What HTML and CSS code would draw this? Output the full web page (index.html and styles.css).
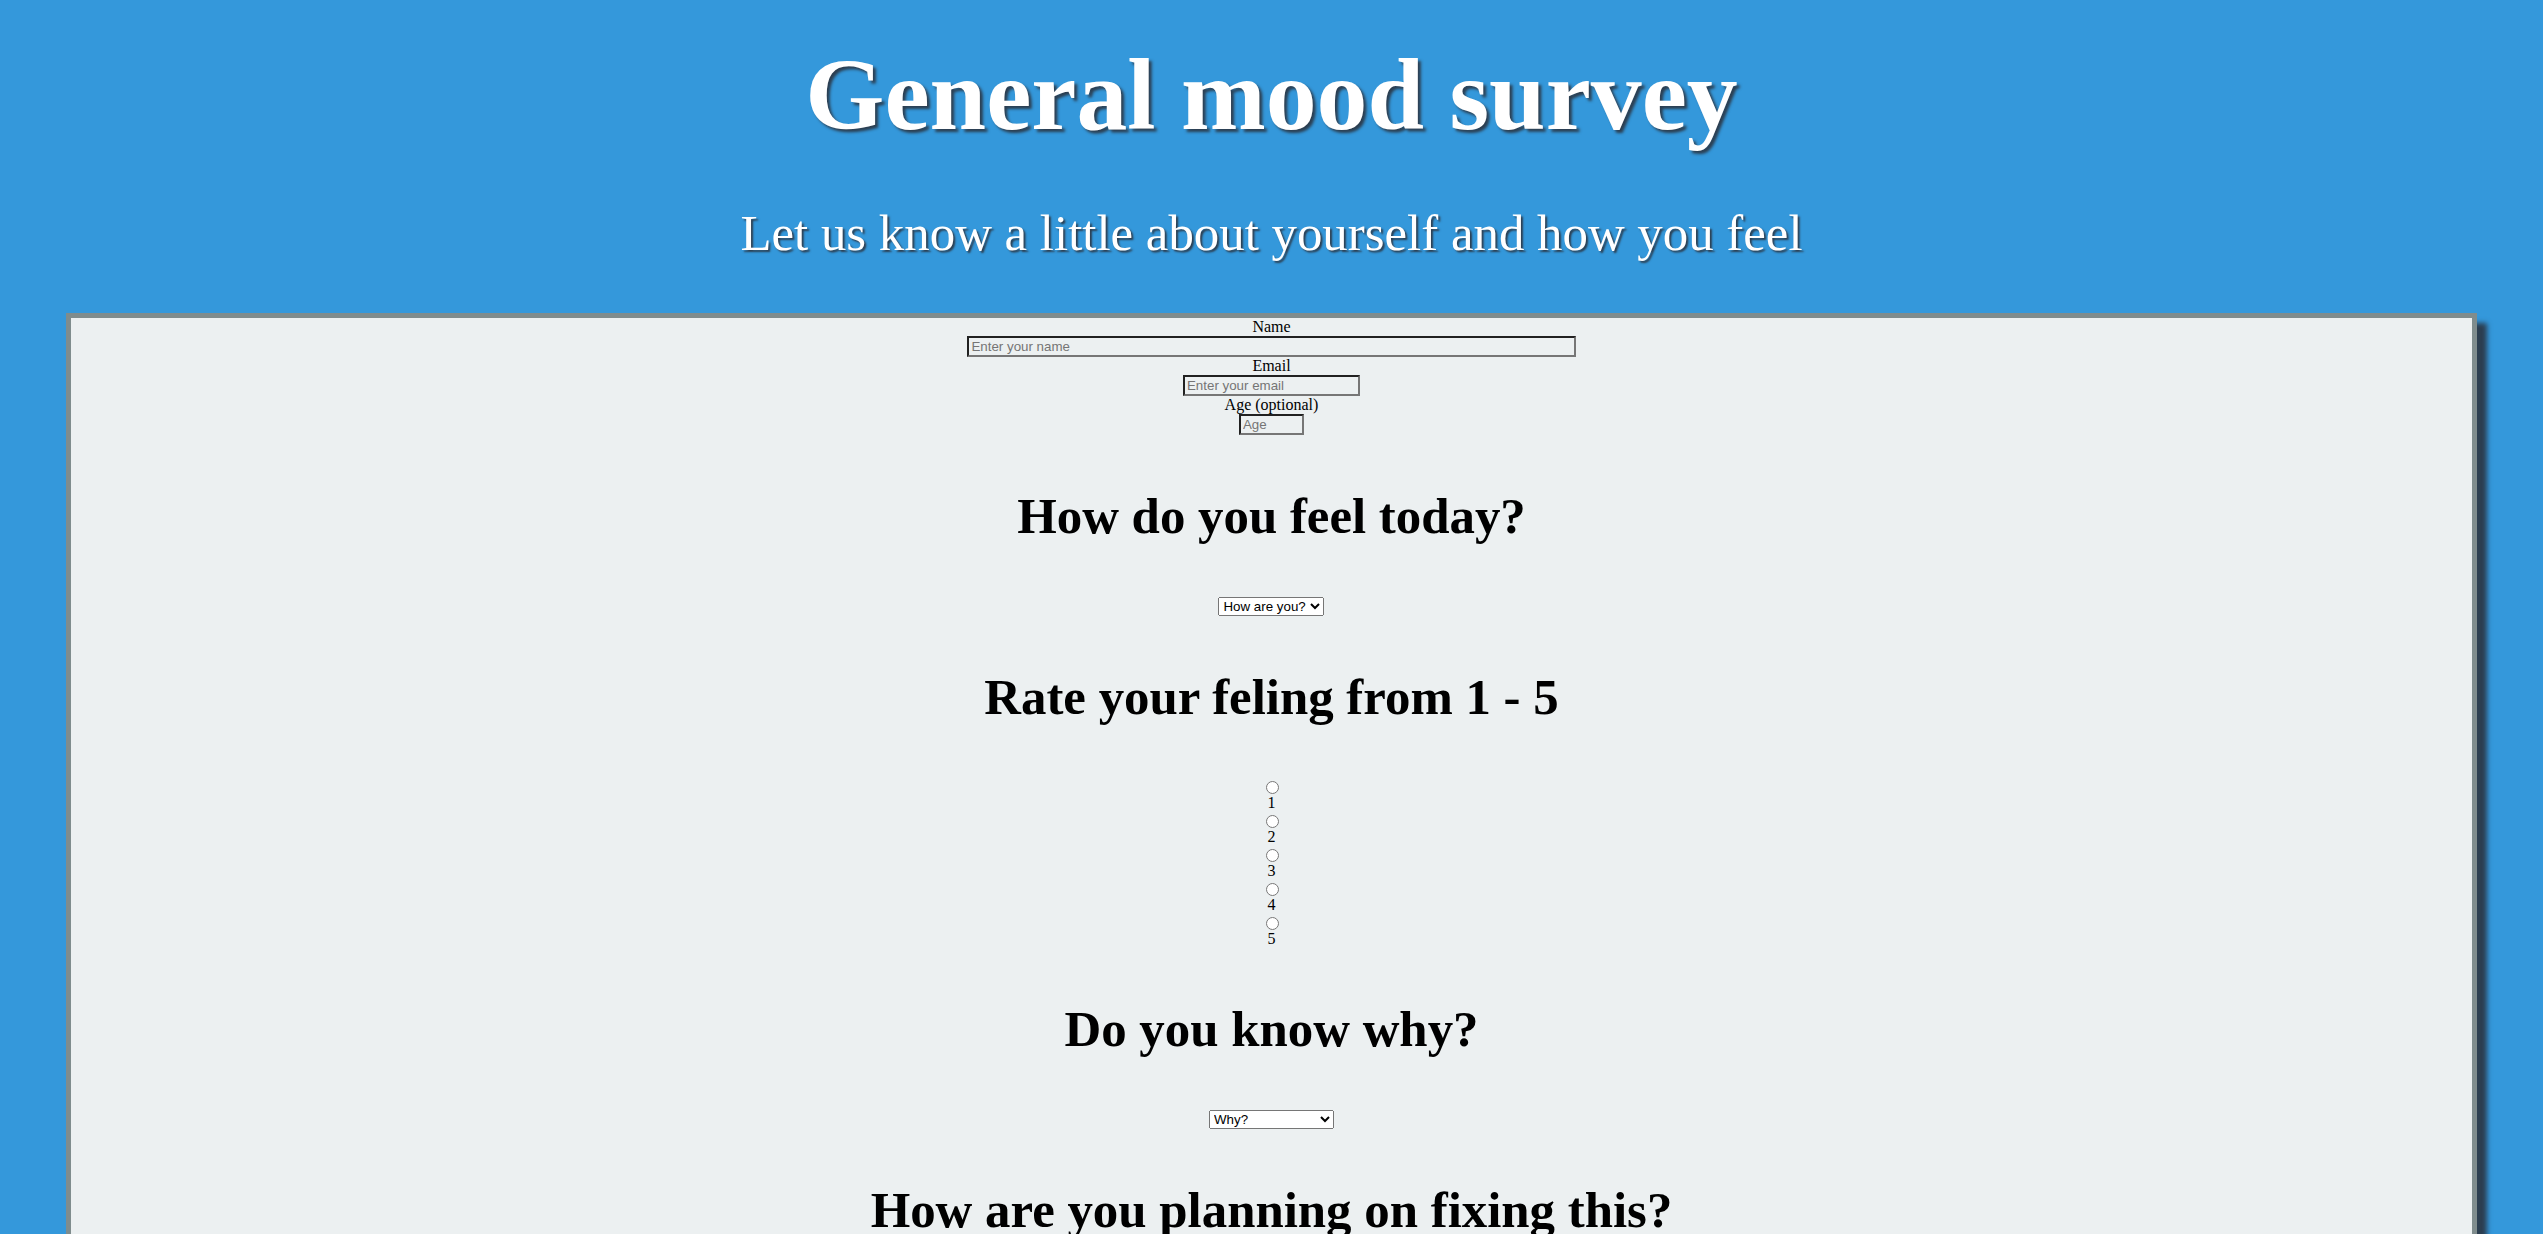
FILE: index.html
```html
<!DOCTYPE html>
<html lang="en">
<head>
<meta charset="utf-8">
<title>General mood survey</title>
<link rel="stylesheet" href="styles.css">
</head>
<body>
<header class="masthead">
  <h1 class="title" id="title">General mood survey</h1>
  <p class="subtitle" id="description">Let us know a little about yourself and how you feel</p>
</header>
<form class="survey" id="survey-form">
  <label class="field-label" for="name" id="name-label">Name</label>
  <input class="field field-name" type="text" id="name" placeholder="Enter your name">
  <label class="field-label" for="email" id="email-label">Email</label>
  <input class="field field-email" type="email" id="email" placeholder="Enter your email">
  <label class="field-label" for="number" id="number-label">Age (optional)</label>
  <input class="field field-age" type="number" id="number" placeholder="Age">

  <h2 class="question">How do you feel today?</h2>
  <select class="choice choice-mood" id="dropdown">
    <option>How are you?</option>
    <option>Good</option>
    <option>Bad</option>
    <option>Normal</option>
  </select>

  <h2 class="question">Rate your feling from 1 - 5</h2>
  <div class="rating">
    <input class="rating-radio" type="radio" name="rate" id="r1" value="1">
    <label class="rating-label" for="r1">1</label>
    <input class="rating-radio" type="radio" name="rate" id="r2" value="2">
    <label class="rating-label" for="r2">2</label>
    <input class="rating-radio" type="radio" name="rate" id="r3" value="3">
    <label class="rating-label" for="r3">3</label>
    <input class="rating-radio" type="radio" name="rate" id="r4" value="4">
    <label class="rating-label" for="r4">4</label>
    <input class="rating-radio" type="radio" name="rate" id="r5" value="5">
    <label class="rating-label" for="r5">5</label>
  </div>

  <h2 class="question">Do you know why?</h2>
  <select class="choice choice-why">
    <option>Why?</option>
    <option>Work or school</option>
    <option>Family</option>
    <option>I don't know</option>
  </select>

  <h2 class="question">How are you planning on fixing this?</h2>
  <textarea class="plan" placeholder="Tell us your plan"></textarea>
  <button class="submit" type="submit" id="submit">Submit</button>
</form>
</body>
</html>
```

FILE: styles.css
```css
html {
  background: #3498db;
}

body {
  margin: 8px;
  background: #3498db;
  font-family: "Liberation Serif", "Times New Roman", serif;
  font-size: 16px;
  color: #000;
}

.masthead {
  text-align: center;
  color: #fff;
}

.title {
  font-size: 4vw;
  font-weight: bold;
  margin: 28px 0 0;
  text-shadow: 3px 3px 3px #2c3e50;
}

.subtitle {
  font-size: 2vw;
  margin: 51px 0 51px;
  text-shadow: 2px 2px 2px #2c3e50;
}

.survey {
  width: 95%;
  margin: 0 auto;
  border: 5px solid #7f8c8d;
  background: #ecf0f1;
  box-shadow: 10px 10px 5px #2c3e50;
  display: flex;
  flex-direction: column;
  align-items: center;
  padding-bottom: 60px;
}

.field-label {
  font-size: 16px;
}

.field {
  font: 13.333px "Liberation Sans", Arial, sans-serif;
  padding: 1px 2px;
  margin: 0;
  border: 2px inset #767676;
  background: transparent;
  color: #000;
  box-sizing: content-box;
}

.field::placeholder {
  color: #757575;
}

.field-name {
  width: 25%;
}

.field-email {
  width: 169px;
}

.field-age {
  width: 57px;
}

.question {
  font-size: 2vw;
  font-weight: bold;
  margin: 52px 0 52px;
  text-align: center;
}

.choice {
  font: 13.333px "Liberation Sans", Arial, sans-serif;
  height: 19px;
  margin: 0;
  box-sizing: border-box;
}

.choice-mood {
  width: 106px;
}

.choice-why {
  width: 125px;
}

.rating {
  display: flex;
  flex-direction: column;
  align-items: center;
}

.rating-radio {
  width: 13px;
  height: 13px;
  margin: 3px 3px 0 5px;
}

.rating-label {
  font-size: 16px;
}

.plan {
  width: 25%;
  height: 80px;
  font: 13.333px "Liberation Sans", Arial, sans-serif;
}

.submit {
  margin-top: 30px;
  font: 13.333px "Liberation Sans", Arial, sans-serif;
}
```
